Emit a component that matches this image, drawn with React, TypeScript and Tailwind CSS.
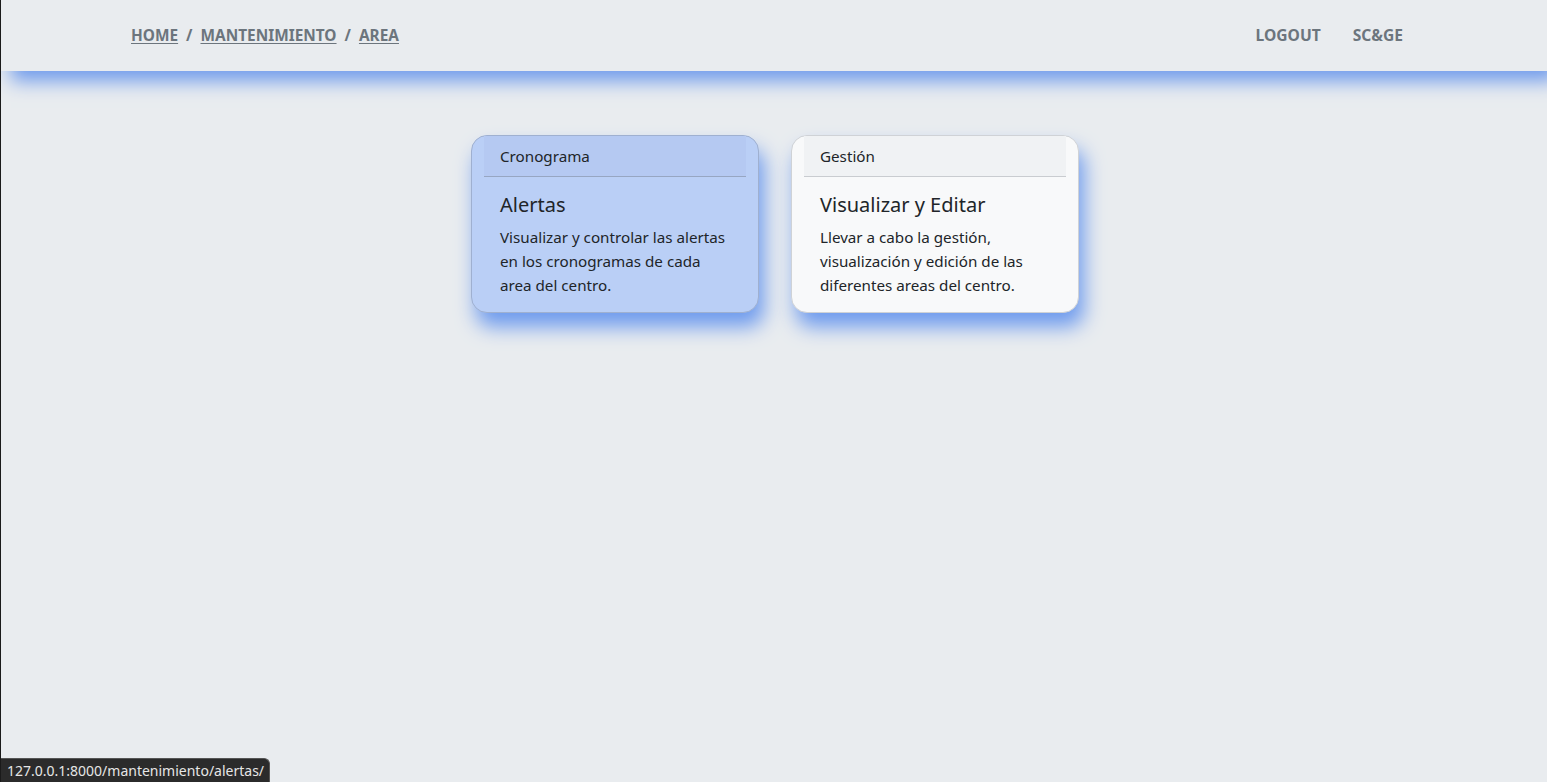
import React from "react";

const font = { fontFamily: '"Noto Sans", "Open Sans", sans-serif' };

function Card({
  header,
  title,
  text,
  active,
}: {
  header: string;
  title: string;
  text: string[];
  active?: boolean;
}) {
  return (
    <div
      className={
        "w-[288px] h-[178px] rounded-2xl border shadow-[5px_14px_20px_#6e9bee] flex flex-col " +
        (active
          ? "bg-[#bacff6] border-[#9fb0d0]"
          : "bg-[#f8f9fa] border-[#cfd2d6]")
      }
    >
      <div
        className={
          "mx-3 h-[41px] px-4 flex items-center border-b text-[15.2px] text-[#212529] " +
          (active
            ? "bg-[#b5c9f2] border-[#97a6c2]"
            : "bg-[#f0f2f4] border-[#c9ccd0]")
        }
      >
        {header}
      </div>
      <div className="px-7 pt-4">
        <div className="text-[20px] leading-6 text-[#212529] mb-2">{title}</div>
        <div className="text-[15.2px] leading-6 text-[#212529]">
          {text.map((t, i) => (
            <div key={i}>{t}</div>
          ))}
        </div>
      </div>
    </div>
  );
}

export default function App() {
  return (
    <div
      className="min-h-screen h-[782px] bg-[#e9ecef] border-l border-[#1a1a1a] relative overflow-hidden"
      style={font}
    >
      <header className="relative z-10 h-[71px] bg-[#e9ecef] shadow-[10px_10px_18px_#6f9bec] flex items-center justify-between pl-[130px] pr-[144px]">
        <nav className="flex items-center gap-2 text-[15.4px] font-bold text-[#6c757d]">
          <a className="underline underline-offset-2">HOME</a>
          <span>/</span>
          <a className="underline underline-offset-2">MANTENIMIENTO</a>
          <span>/</span>
          <a className="underline underline-offset-2">AREA</a>
        </nav>
        <div className="flex items-center gap-8 text-[15.6px] font-bold text-[#6c757d]">
          <a>LOGOUT</a>
          <a>SC&amp;GE</a>
        </div>
      </header>
      <main className="flex justify-center gap-[32px] pt-16 pl-[2px]">
        <Card
          active
          header="Cronograma"
          title="Alertas"
          text={[
            "Visualizar y controlar las alertas",
            "en los cronogramas de cada",
            "area del centro.",
          ]}
        />
        <Card
          header="Gestión"
          title="Visualizar y Editar"
          text={[
            "Llevar a cabo la gestión,",
            "visualización y edición de las",
            "diferentes areas del centro.",
          ]}
        />
      </main>
      <div className="absolute bottom-0 left-0 h-[24px] w-[269px] bg-[#2b2b2b] rounded-tr-md border-t border-r border-[#555] flex items-center pl-[6px] text-[14px] text-[#e6e6e6]">
        127.0.0.1:8000/mantenimiento/alertas/
      </div>
    </div>
  );
}
